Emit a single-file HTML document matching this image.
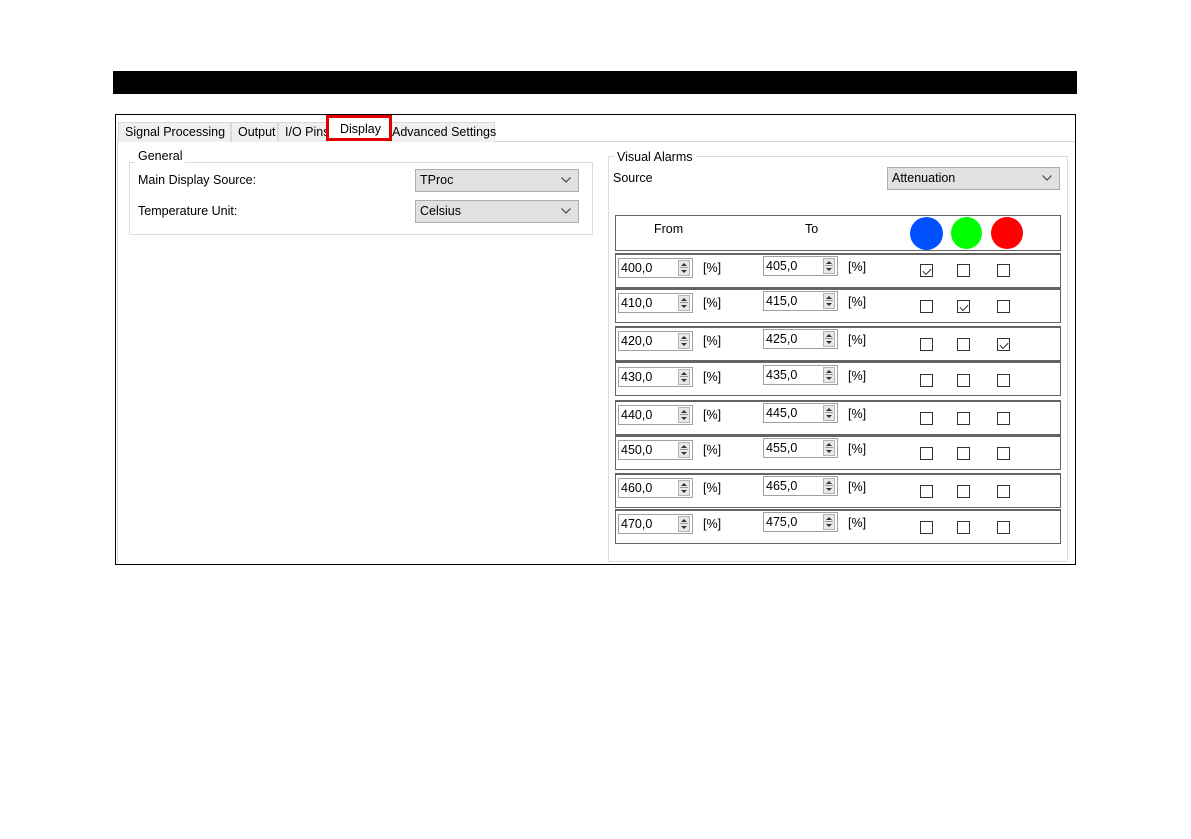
<!DOCTYPE html>
<html><head><meta charset="utf-8"><style>
*{margin:0;padding:0;box-sizing:border-box}
body{width:1191px;height:839px;background:#fff;position:relative;font-family:"Liberation Sans",Arial,sans-serif;font-size:12.5px;color:#000;overflow:hidden}
.a{position:absolute}
.tab{position:absolute;top:122px;height:20px;background:#f0f0f0;border:1px solid #d9d9d9;border-bottom:none;line-height:18px;padding-left:6px;white-space:nowrap}
.combo{position:absolute;background:#e1e1e1;border:1px solid #adadad;line-height:20px;padding-left:4px}
.combo svg{position:absolute;right:7px;top:7px}
.row{position:absolute;left:615px;width:446px;height:35px;border:1px solid #646464;border-top-width:2px}
.in{position:absolute;width:75px;height:20px;border:1px solid #a0a0a0;background:#fff;line-height:18px;padding-left:2px}
.sp{position:absolute;right:2px;top:1px;width:12px;height:16px;background:#e8e8e8;border:1px solid #b4b4b4}
.sp:before{content:"";position:absolute;left:2px;top:2px;border:3px solid transparent;border-bottom:3px solid #333;border-top:0}
.sp:after{content:"";position:absolute;left:2px;top:9px;border:3px solid transparent;border-top:3px solid #333;border-bottom:0}
.sp i{position:absolute;left:1px;right:1px;top:6px;height:1px;background:#999}
.pc{position:absolute}
.cb{position:absolute;width:13px;height:13px;border:1px solid #333;background:#fff}
.ck:after{content:"";position:absolute;left:2px;width:7px;height:4px;border-left:1px solid #333;border-bottom:1px solid #333;transform:rotate(-45deg);top:3px}
</style></head><body>
<div class="a" style="left:113px;top:71px;width:964px;height:23px;background:#000"></div>
<div class="a" style="left:115px;top:114px;width:961px;height:451px;border:1px solid #000"></div>
<div class="a" style="left:117px;top:141px;width:958px;height:1px;background:#d9d9d9"></div>
<div class="a" style="left:117px;top:141px;width:1px;height:422px;background:#d9d9d9"></div>
<div class="tab" style="left:118px;width:113px">Signal Processing</div>
<div class="tab" style="left:231px;width:47px">Output</div>
<div class="tab" style="left:278px;width:50px">I/O Pins</div>
<div class="tab" style="left:389px;width:106px;padding-left:2px">Advanced Settings</div>
<div class="a" style="left:328px;top:117px;width:62px;height:25px;background:#fff;border:1px solid #d9d9d9;border-bottom:none"></div>
<div class="a" style="left:326px;top:115px;width:66px;height:26px;border:3px solid #e10000"></div>
<div class="a" style="left:340px;top:122px">Display</div>

<div class="a" style="left:129px;top:162px;width:464px;height:73px;border:1px solid #dcdcdc"></div>
<div class="a" style="left:135px;top:149px;background:#fff;padding:0 3px">General</div>
<div class="a" style="left:138px;top:173px">Main Display Source:</div>
<div class="a" style="left:138px;top:204px">Temperature Unit:</div>
<div class="combo" style="left:415px;top:169px;width:164px;height:23px">TProc<svg width="10" height="6"><path d="M0.5 0.5L5 5L9.5 0.5" fill="none" stroke="#333"/></svg></div>
<div class="combo" style="left:415px;top:200px;width:164px;height:23px">Celsius<svg width="10" height="6"><path d="M0.5 0.5L5 5L9.5 0.5" fill="none" stroke="#333"/></svg></div>

<div class="a" style="left:608px;top:156px;width:460px;height:406px;border:1px solid #dcdcdc"></div>
<div class="a" style="left:614px;top:150px;background:#fff;padding:0 3px">Visual Alarms</div>
<div class="a" style="left:613px;top:171px">Source</div>
<div class="combo" style="left:887px;top:167px;width:173px;height:23px">Attenuation<svg width="10" height="6"><path d="M0.5 0.5L5 5L9.5 0.5" fill="none" stroke="#333"/></svg></div>

<div class="a" style="left:615px;top:215px;width:446px;height:36px;border:1px solid #646464"></div>
<div class="a" style="left:654px;top:222px">From</div>
<div class="a" style="left:805px;top:222px">To</div>
<div class="a" style="left:910px;top:217px;width:33px;height:33px;border-radius:50%;background:#0050ff"></div>
<div class="a" style="left:951px;top:217px;width:31px;height:32px;border-radius:50%;background:#00ff00"></div>
<div class="a" style="left:991px;top:217px;width:32px;height:32px;border-radius:50%;background:#ff0000"></div>

<div class="row" style="top:253px"><div class="in" style="left:2px;top:3px">400,0<div class="sp"><i></i></div></div><div class="pc" style="left:87px;top:6px">[%]</div><div class="in" style="left:147px;top:1px">405,0<div class="sp"><i></i></div></div><div class="pc" style="left:232px;top:5px">[%]</div><div class="cb ck" style="left:304px;top:9px"></div><div class="cb" style="left:341px;top:9px"></div><div class="cb" style="left:381px;top:9px"></div></div>
<div class="row" style="top:288px"><div class="in" style="left:2px;top:3px">410,0<div class="sp"><i></i></div></div><div class="pc" style="left:87px;top:6px">[%]</div><div class="in" style="left:147px;top:1px">415,0<div class="sp"><i></i></div></div><div class="pc" style="left:232px;top:5px">[%]</div><div class="cb" style="left:304px;top:10px"></div><div class="cb ck" style="left:341px;top:10px"></div><div class="cb" style="left:381px;top:10px"></div></div>
<div class="row" style="top:326px"><div class="in" style="left:2px;top:3px">420,0<div class="sp"><i></i></div></div><div class="pc" style="left:87px;top:6px">[%]</div><div class="in" style="left:147px;top:1px">425,0<div class="sp"><i></i></div></div><div class="pc" style="left:232px;top:5px">[%]</div><div class="cb" style="left:304px;top:10px"></div><div class="cb" style="left:341px;top:10px"></div><div class="cb ck" style="left:381px;top:10px"></div></div>
<div class="row" style="top:361px"><div class="in" style="left:2px;top:4px">430,0<div class="sp"><i></i></div></div><div class="pc" style="left:87px;top:7px">[%]</div><div class="in" style="left:147px;top:2px">435,0<div class="sp"><i></i></div></div><div class="pc" style="left:232px;top:6px">[%]</div><div class="cb" style="left:304px;top:11px"></div><div class="cb" style="left:341px;top:11px"></div><div class="cb" style="left:381px;top:11px"></div></div>
<div class="row" style="top:400px"><div class="in" style="left:2px;top:3px">440,0<div class="sp"><i></i></div></div><div class="pc" style="left:87px;top:6px">[%]</div><div class="in" style="left:147px;top:1px">445,0<div class="sp"><i></i></div></div><div class="pc" style="left:232px;top:5px">[%]</div><div class="cb" style="left:304px;top:10px"></div><div class="cb" style="left:341px;top:10px"></div><div class="cb" style="left:381px;top:10px"></div></div>
<div class="row" style="top:435px"><div class="in" style="left:2px;top:3px">450,0<div class="sp"><i></i></div></div><div class="pc" style="left:87px;top:6px">[%]</div><div class="in" style="left:147px;top:1px">455,0<div class="sp"><i></i></div></div><div class="pc" style="left:232px;top:5px">[%]</div><div class="cb" style="left:304px;top:10px"></div><div class="cb" style="left:341px;top:10px"></div><div class="cb" style="left:381px;top:10px"></div></div>
<div class="row" style="top:473px"><div class="in" style="left:2px;top:3px">460,0<div class="sp"><i></i></div></div><div class="pc" style="left:87px;top:6px">[%]</div><div class="in" style="left:147px;top:1px">465,0<div class="sp"><i></i></div></div><div class="pc" style="left:232px;top:5px">[%]</div><div class="cb" style="left:304px;top:10px"></div><div class="cb" style="left:341px;top:10px"></div><div class="cb" style="left:381px;top:10px"></div></div>
<div class="row" style="top:509px"><div class="in" style="left:2px;top:3px">470,0<div class="sp"><i></i></div></div><div class="pc" style="left:87px;top:6px">[%]</div><div class="in" style="left:147px;top:1px">475,0<div class="sp"><i></i></div></div><div class="pc" style="left:232px;top:5px">[%]</div><div class="cb" style="left:304px;top:10px"></div><div class="cb" style="left:341px;top:10px"></div><div class="cb" style="left:381px;top:10px"></div></div>
</body></html>
